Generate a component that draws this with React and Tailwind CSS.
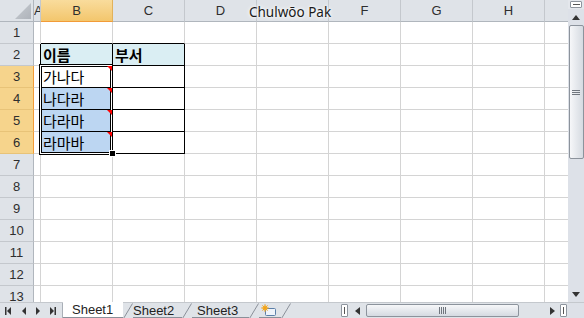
import React from 'react';

const COLS = ['B', 'C', 'D', 'E', 'F', 'G', 'H'];
const ROWS = [1, 2, 3, 4, 5, 6, 7, 8, 9, 10, 11, 12, 13];
const NAMES = { 3: '가나다', 4: '나다라', 5: '다라마', 6: '라마바' };
const KR = { fontFamily: '"Noto Sans CJK KR", "Liberation Sans", sans-serif' };
const LAT = { fontFamily: '"Liberation Sans", Arial, sans-serif' };

function Tri({ dir, bar }) {
  if (dir === 'left')
    return (
      <svg width="7" height="8" viewBox="0 0 7 8">
        {bar && <rect x="0" y="0" width="1.5" height="8" fill="#333" />}
        <polygon points={bar ? '6,0 6,8 2,4' : '5,0 5,8 1,4'} fill="#333" />
      </svg>
    );
  return (
    <svg width="7" height="8" viewBox="0 0 7 8">
      <polygon points={bar ? '1,0 1,8 5,4' : '2,0 2,8 6,4'} fill="#333" />
      {bar && <rect x="5.5" y="0" width="1.5" height="8" fill="#333" />}
    </svg>
  );
}

function Slash() {
  return (
    <svg width="10" height="16" viewBox="0 0 10 16" className="shrink-0">
      <line x1="0.5" y1="15.5" x2="9.5" y2="0.5" stroke="#8a9099" strokeWidth="1" />
    </svg>
  );
}

function ColHeader({ c }) {
  if (c === 'B')
    return (
      <div className="w-[72px] h-full shrink-0 flex items-center justify-center bg-gradient-to-b from-[#f9dc9c] to-[#f3c66c] border-r border-b border-r-[#e2b25a] border-b-[#f29b38] text-[13px] text-[#2e2e2e]" style={LAT}>
        {c}
      </div>
    );
  return (
    <div className="w-[72px] h-full shrink-0 flex items-center justify-center bg-[#dfe3e8] border-r border-b border-r-[#c4c8cd] border-b-[#b0b6bd] text-[13px] text-[#2e2e2e]" style={LAT}>
      {c === 'E' ? '' : c}
    </div>
  );
}

function RowHeader({ r }) {
  const sel = r >= 3 && r <= 6;
  return (
    <div
      className={
        sel
          ? 'w-[34px] h-full shrink-0 flex items-center justify-center bg-[#f6d48c] border-r border-b border-r-[#f29b38] border-b-[#e8c378] text-[13px] text-[#2e2e2e]'
          : 'w-[34px] h-full shrink-0 flex items-center justify-center bg-[#dfe3e8] border-r border-b border-r-[#b0b6bd] border-b-[#c4c8cd] text-[13px] text-[#2e2e2e]'
      }
      style={LAT}
    >
      {r}
    </div>
  );
}

function Row({ r }) {
  const inTable = r >= 2 && r <= 6;
  const topOfTable = r >= 1 && r <= 6;
  const bBg = r === 2 ? 'bg-[#daeef3]' : r >= 4 && r <= 6 ? 'bg-[#bcd6f2]' : 'bg-white';
  const cBg = r === 2 ? 'bg-[#daeef3]' : 'bg-white';
  const bText = r === 2 ? '이름' : NAMES[r];
  const cText = r === 2 ? '부서' : '';
  return (
    <div className="flex h-[22px] shrink-0">
      <RowHeader r={r} />
      <div className={'w-[7px] h-full shrink-0 border-r border-b border-b-[#d4d4d4] ' + (inTable ? 'border-r-black' : 'border-r-[#d4d4d4]')} />
      <div
        className={
          'w-[72px] h-full shrink-0 border-r border-b flex items-center pl-[2px] text-[15px] text-black leading-none ' +
          bBg + ' ' +
          (inTable ? 'border-r-black ' : 'border-r-[#d4d4d4] ') +
          (topOfTable ? 'border-b-black ' : 'border-b-[#d4d4d4] ') +
          (r === 2 ? 'font-bold' : '')
        }
        style={KR}
      >
        {bText}
      </div>
      <div
        className={
          'w-[72px] h-full shrink-0 border-r border-b flex items-center pl-[2px] text-[15px] text-black leading-none ' +
          cBg + ' ' +
          (inTable ? 'border-r-black ' : 'border-r-[#d4d4d4] ') +
          (topOfTable ? 'border-b-black ' : 'border-b-[#d4d4d4] ') +
          (r === 2 ? 'font-bold' : '')
        }
        style={KR}
      >
        {cText}
      </div>
      {['D', 'E', 'F', 'G', 'H'].map((c) => (
        <div key={c} className="w-[72px] h-full shrink-0 border-r border-b border-[#d4d4d4] bg-white" />
      ))}
      <div className="flex-1 h-full border-b border-[#d4d4d4] bg-white" />
    </div>
  );
}

export default function App() {
  return (
    <div className="relative w-[584px] h-[318px] overflow-hidden bg-white flex flex-col select-none">
      <div className="flex h-[302px] shrink-0">
        <div className="relative w-[568px] h-full overflow-hidden flex flex-col">
          <div className="flex h-[22px] shrink-0">
            <div className="relative w-[34px] h-full shrink-0 bg-[#dfe3e8] border-r border-b border-r-[#b0b6bd] border-b-[#b0b6bd]">
              <div className="absolute left-[15px] top-[3px] w-[16px] h-[16px] bg-gradient-to-br from-[#c9cdd2] to-[#aeb3ba] [clip-path:polygon(100%_0,100%_100%,0_100%)]" />
            </div>
            <div className="w-[7px] h-full shrink-0 overflow-hidden bg-[#dfe3e8] border-r border-b border-r-[#c4c8cd] border-b-[#b0b6bd] flex items-center text-[13px] text-[#2e2e2e]" style={LAT}>
              <span>A</span>
            </div>
            {COLS.map((c) => (
              <ColHeader key={c} c={c} />
            ))}
            <div className="flex-1 h-full bg-[#dfe3e8] border-b border-b-[#b0b6bd]" />
          </div>
          {ROWS.map((r) => (
            <Row key={r} r={r} />
          ))}

          <div className="absolute left-[39px] top-[64px] w-[74px] h-[91px] border border-black z-10 pointer-events-none">
            <div className="w-full h-full border border-white">
              <div className="w-full h-full border border-black" />
            </div>
          </div>
          {[0, 1, 2, 3].map((i) => (
            <div
              key={i}
              className="absolute left-[107px] w-[5px] h-[5px] bg-[#ff0000] z-20 [clip-path:polygon(0_0,100%_0,100%_100%)]"
              style={{ top: 66 + i * 22 }}
            />
          ))}
          <div className="absolute left-[109px] top-[150px] w-[7px] h-[7px] bg-black border border-white z-20" />
        </div>

        <div className="w-[16px] h-full shrink-0 bg-[#dde1e8] flex flex-col items-center">
          <div className="h-[9px] w-full flex items-center justify-center bg-[#e4e7ec]">
            <div className="w-[12px] h-[7px] bg-white border border-[#8e959e] rounded-[1px] flex items-center justify-center">
              <div className="w-[7px] h-[1px] bg-[#555]" />
            </div>
          </div>
          <div className="h-[16px] w-full flex items-center justify-center">
            <svg width="8" height="5" viewBox="0 0 8 5">
              <polygon points="0,5 8,5 4,0" fill="#333" />
            </svg>
          </div>
          <div className="h-[134px] w-[15px] shrink-0 rounded-[2px] border border-[#8c939c] bg-gradient-to-r from-[#f6f7f9] to-[#d5dae1] flex flex-col items-center justify-center gap-[1px]">
            <div className="w-[8px] h-[1px] bg-[#70767e]" />
            <div className="w-[8px] h-[1px] bg-[#70767e]" />
            <div className="w-[8px] h-[1px] bg-[#70767e]" />
          </div>
          <div className="flex-1" />
          <div className="h-[16px] w-full flex items-center justify-center">
            <svg width="8" height="5" viewBox="0 0 8 5">
              <polygon points="0,0 8,0 4,5" fill="#333" />
            </svg>
          </div>
        </div>
      </div>

      <div className="h-[16px] shrink-0 flex bg-[#dfe3e8] border-t border-t-[#c4c8cd] text-[13px] text-[#222]" style={LAT}>
        <div className="w-[63px] h-full shrink-0 flex items-center border-r border-r-[#a9afb7]">
          <div className="ml-[5px]"><Tri dir="left" bar /></div>
          <div className="ml-[9px]"><Tri dir="left" /></div>
          <div className="ml-[6px]"><Tri dir="right" /></div>
          <div className="ml-[8px]"><Tri dir="right" bar /></div>
        </div>
        <div className="w-[60px] h-[16px] -mt-[1px] shrink-0 bg-white border-b border-b-[#8a9099] flex items-center pl-[9px] leading-none">Sheet1</div>
        <Slash />
        <div className="w-[49px] h-full shrink-0 flex items-center leading-none border-b border-b-[#8a9099]">Sheet2</div>
        <Slash />
        <div className="w-[57px] h-full shrink-0 flex items-center pl-[5px] leading-none border-b border-b-[#8a9099]">Sheet3</div>
        <Slash />
        <div className="w-[22px] h-full shrink-0 flex items-center pl-[2px] border-b border-b-[#8a9099]">
          <svg width="16" height="13" viewBox="0 0 16 13">
            <rect x="4.5" y="4.5" width="10" height="7" rx="1" fill="#eef3fa" stroke="#5b7fa8" />
            <circle cx="4" cy="4" r="2.5" fill="#f5b82e" />
            <path d="M4 0v8M0 4h8M1.3 1.3l5.4 5.4M6.7 1.3l-5.4 5.4" stroke="#f0a020" strokeWidth="0.8" />
          </svg>
        </div>
        <Slash />
        <div className="flex-1" />
        <div className="w-[227px] h-full shrink-0 flex items-center">
          <div className="w-[7px] h-[13px] bg-white border border-[#8e959e] rounded-[1px] flex items-center justify-center">
            <div className="w-[1px] h-[7px] bg-[#555]" />
          </div>
          <div className="w-[18px] h-full flex items-center justify-center">
            <svg width="5" height="8" viewBox="0 0 5 8">
              <polygon points="5,0 5,8 0,4" fill="#333" />
            </svg>
          </div>
          <div className="w-[153px] h-[13px] shrink-0 rounded-[2px] border border-[#8c939c] bg-gradient-to-b from-[#f6f7f9] to-[#d5dae1] flex items-center justify-center gap-[1px]">
            <div className="w-[1px] h-[7px] bg-[#70767e]" />
            <div className="w-[1px] h-[7px] bg-[#70767e]" />
            <div className="w-[1px] h-[7px] bg-[#70767e]" />
            <div className="w-[1px] h-[7px] bg-[#70767e]" />
          </div>
          <div className="flex-1" />
          <div className="w-[16px] h-full flex items-center justify-center">
            <svg width="5" height="8" viewBox="0 0 5 8">
              <polygon points="0,0 0,8 5,4" fill="#333" />
            </svg>
          </div>
          <div className="w-[7px] h-[13px] mr-[1px] bg-white border border-[#8e959e] rounded-[1px] flex items-center justify-center">
            <div className="w-[1px] h-[7px] bg-[#555]" />
          </div>
        </div>
        <div className="w-[16px] h-full shrink-0 bg-[#dde1e8]" />
      </div>

      <div
        className="absolute left-[249px] top-[2px] text-[13.5px] text-[#1a1a1a] z-30 [text-shadow:0_0_3px_#fff,0_0_5px_#fff]"
        style={{ fontFamily: '"Noto Sans", "Liberation Sans", sans-serif' }}
      >
        Chulwōo Pak
      </div>
    </div>
  );
}
